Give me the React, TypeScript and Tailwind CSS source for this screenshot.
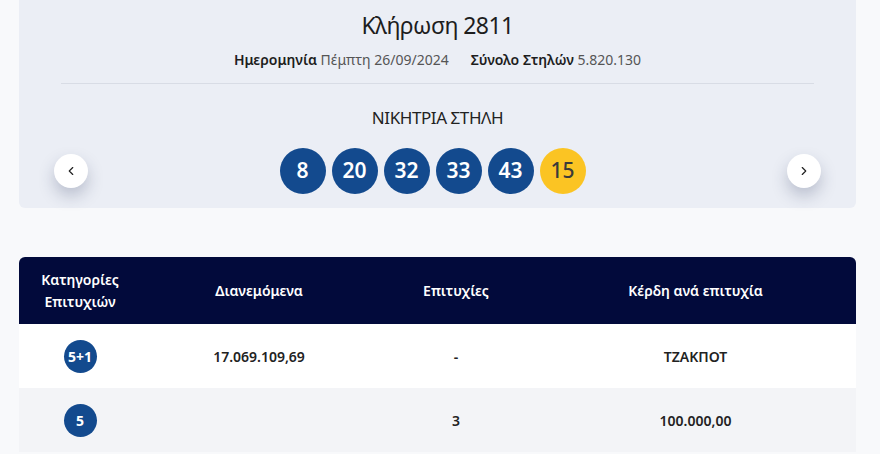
import React from "react";
import { ChevronLeft, ChevronRight } from "lucide-react";

const numbers = [8, 20, 32, 33, 43];
const bonus = 15;

const rows = [
  { cat: "5+1", dist: "17.069.109,69", wins: "-", prize: "ΤΖΑΚΠΟΤ" },
  { cat: "5", dist: "", wins: "3", prize: "100.000,00" },
];

function Ball({ value, joker }: { value: number; joker?: boolean }) {
  return (
    <div
      className={
        joker
          ? "w-[46px] h-[46px] rounded-full bg-[#fbc423] text-[#3a3a3a] flex items-center justify-center text-[21px] font-medium"
          : "w-[46px] h-[46px] rounded-full bg-[#134a8e] text-white flex items-center justify-center text-[21px] font-semibold"
      }
    >
      {value}
    </div>
  );
}

export default function App() {
  return (
    <div
      className="w-[880px] h-[454px] overflow-hidden bg-[#f8f9fb] text-[#222]"
      style={{ fontFamily: '"Noto Sans", "Open Sans", sans-serif' }}
    >
      {/* Draw card */}
      <div className="mx-[19px] w-[837px] h-[208px] bg-[#ebeef5] rounded-b-md flex flex-col items-center">
        <h1 className="mt-[8px] text-[23px] leading-[34px] font-normal tracking-tight text-[#1d1d1d]">
          Κλήρωση 2811
        </h1>
        <div className="mt-[9px] flex items-center gap-[22px] text-[14px] leading-[18px] text-[#333]">
          <span>
            <span className="font-semibold text-[#1d1d1d]">Ημερομηνία</span>{" "}
            <span className="text-[#555]">Πέμπτη 26/09/2024</span>
          </span>
          <span>
            <span className="font-semibold text-[#1d1d1d]">Σύνολο Στηλών</span>{" "}
            <span className="text-[#555]">5.820.130</span>
          </span>
        </div>
        <div className="mt-[14px] w-[753px] h-px bg-[#d8dce5]" />
        <div className="mt-[23px] text-[17px] leading-[22px] text-[#222] tracking-tight">
          ΝΙΚΗΤΡΙΑ ΣΤΗΛΗ
        </div>
        <div className="mt-[19px] w-full flex items-center justify-between px-[35px]">
          <button className="w-[34px] h-[34px] rounded-full bg-white flex items-center justify-center shadow-[0_8px_16px_rgba(40,50,90,0.25)]">
            <ChevronLeft className="w-[14px] h-[14px] text-[#222]" strokeWidth={2} />
          </button>
          <div className="flex items-center gap-[6px] mr-[10px]">
            {numbers.map((n) => (
              <Ball key={n} value={n} />
            ))}
            <Ball value={bonus} joker />
          </div>
          <button className="w-[34px] h-[34px] rounded-full bg-white flex items-center justify-center shadow-[0_8px_16px_rgba(40,50,90,0.25)]">
            <ChevronRight className="w-[14px] h-[14px] text-[#222]" strokeWidth={2} />
          </button>
        </div>
      </div>

      {/* Results table */}
      <div className="mt-[49px] mx-[19px] w-[837px] rounded-t-md overflow-hidden">
        <div className="h-[67px] bg-[#020a3b] text-white grid grid-cols-[122px_236px_158px_321px] items-center text-[14px] font-semibold text-center">
          <div className="leading-[22px]">
            Κατηγορίες
            <br />
            Επιτυχιών
          </div>
          <div>Διανεμόμενα</div>
          <div>Επιτυχίες</div>
          <div>Κέρδη ανά επιτυχία</div>
        </div>
        {rows.map((r, i) => (
          <div
            key={r.cat}
            className={
              i % 2 === 0
                ? "h-[64px] bg-white grid grid-cols-[122px_236px_158px_321px] items-center text-center text-[14px] font-semibold text-[#222]"
                : "h-[64px] bg-[#f3f4f7] grid grid-cols-[122px_236px_158px_321px] items-center text-center text-[14px] font-semibold text-[#222]"
            }
          >
            <div className="flex justify-center">
              <div className="w-[33px] h-[33px] rounded-full bg-[#134a8e] text-white flex items-center justify-center text-[14px] font-bold">
                {r.cat}
              </div>
            </div>
            <div>{r.dist}</div>
            <div>{r.wins}</div>
            <div>{r.prize}</div>
          </div>
        ))}
      </div>
    </div>
  );
}
